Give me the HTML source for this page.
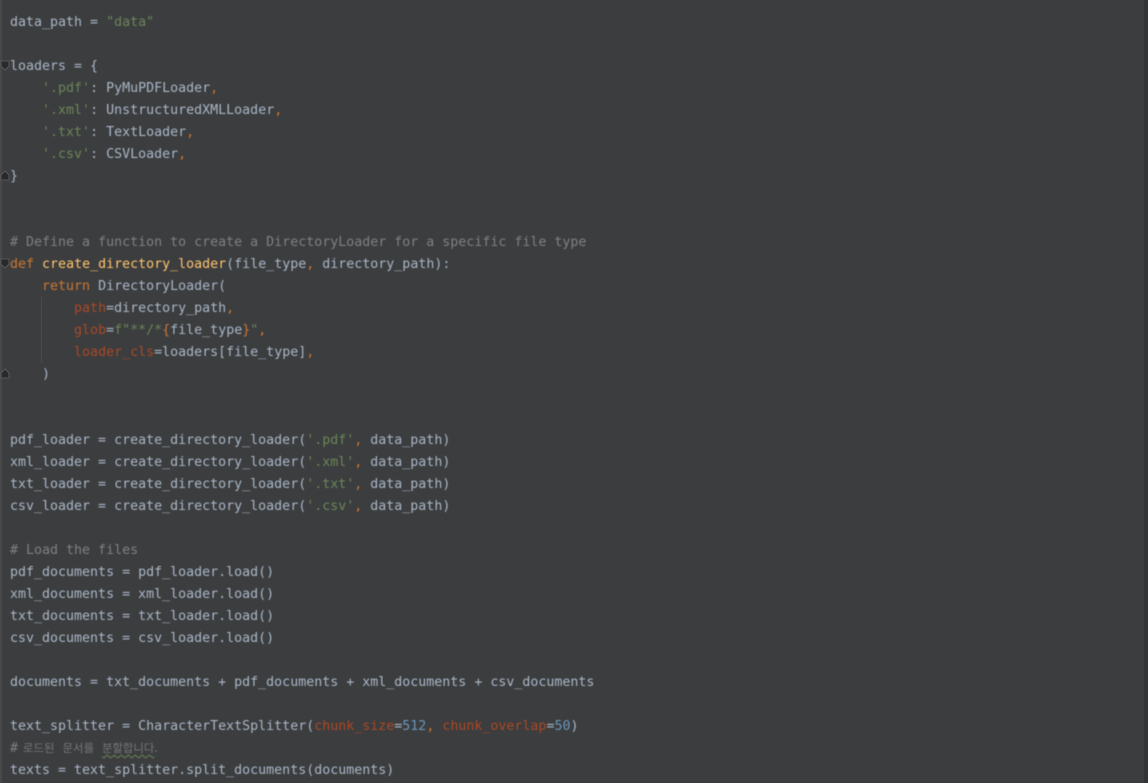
<!DOCTYPE html>
<html lang="en">
<head>
<meta charset="utf-8">
<style>
html,body{margin:0;padding:0;width:1148px;height:783px;overflow:hidden;background:#3c3d3f}
#ed{position:absolute;left:0;top:0;width:1148px;height:783px;background:#3c3d3f;overflow:hidden}
#strip{position:absolute;left:0;top:0;width:2px;height:783px;background:#47484a}
#right{position:absolute;right:0;top:0;width:4px;height:783px;background:#333436}
pre{position:absolute;left:10px;top:12px;margin:0;font:13.305px/22px "DejaVu Sans Mono",monospace;color:#a9b7c6;filter:blur(.4px)}
.s{color:#6a8759}.k{color:#cc7832}.c{color:#808080}.p{color:#aa4926}.n{color:#6897bb}.f{color:#ffc66d}
.h{font-family:"Noto Sans CJK KR",sans-serif;font-size:11.4px;line-height:1;color:#777}
.w{text-decoration:underline wavy #6a8759 1px;text-underline-offset:2px}
.g{position:absolute;background:#4a4b4d}
svg{position:absolute;left:0;top:0}
</style>
</head>
<body>
<div id="ed">
<div id="strip"></div>
<div id="right"></div>
<div class="g" style="left:41px;top:297px;width:1px;height:66px"></div>
<svg width="12" height="783" viewBox="0 0 12 783">
<path d="M1 61h8v5l-4 4-4-4z" fill="#28292b" stroke="#606264" stroke-width=".8"/>
<path d="M1 259h8v5l-4 4-4-4z" fill="#28292b" stroke="#606264" stroke-width=".8"/>
<path d="M1 180h8v-5l-4-4-4 4z" fill="#28292b" stroke="#606264" stroke-width=".8"/>
<path d="M1 378h8v-5l-4-4-4 4z" fill="#28292b" stroke="#606264" stroke-width=".8"/>
</svg>
<pre>data_path = <span class="s">"data"</span>

loaders = {
    <span class="s">'.pdf'</span>: PyMuPDFLoader<span class="k">,</span>
    <span class="s">'.xml'</span>: UnstructuredXMLLoader<span class="k">,</span>
    <span class="s">'.txt'</span>: TextLoader<span class="k">,</span>
    <span class="s">'.csv'</span>: CSVLoader<span class="k">,</span>
}


<span class="c"># Define a function to create a DirectoryLoader for a specific file type</span>
<span class="k">def</span> <span class="f">create_directory_loader</span>(file_type<span class="k">,</span> directory_path):
    <span class="k">return</span> DirectoryLoader(
        <span class="p">path</span>=directory_path<span class="k">,</span>
        <span class="p">glob</span>=<span class="s">f"**/*</span><span class="k">{</span>file_type<span class="k">}</span><span class="s">"</span><span class="k">,</span>
        <span class="p">loader_cls</span>=loaders[file_type]<span class="k">,</span>
    )


pdf_loader = create_directory_loader(<span class="s">'.pdf'</span><span class="k">,</span> data_path)
xml_loader = create_directory_loader(<span class="s">'.xml'</span><span class="k">,</span> data_path)
txt_loader = create_directory_loader(<span class="s">'.txt'</span><span class="k">,</span> data_path)
csv_loader = create_directory_loader(<span class="s">'.csv'</span><span class="k">,</span> data_path)

<span class="c"># Load the files</span>
pdf_documents = pdf_loader.load()
xml_documents = xml_loader.load()
txt_documents = txt_loader.load()
csv_documents = csv_loader.load()

documents = txt_documents + pdf_documents + xml_documents + csv_documents

text_splitter = CharacterTextSplitter(<span class="p">chunk_size</span>=<span class="n">512</span><span class="k">,</span> <span class="p">chunk_overlap</span>=<span class="n">50</span>)
<span class="c"># <span class="h" style="margin-left:-3px">로드된</span> <span class="h">문서를</span> <span class="h w">분할합니다</span><span class="h">.</span></span>
texts = text_splitter.split_documents(documents)</pre>
</div>
</body>
</html>
